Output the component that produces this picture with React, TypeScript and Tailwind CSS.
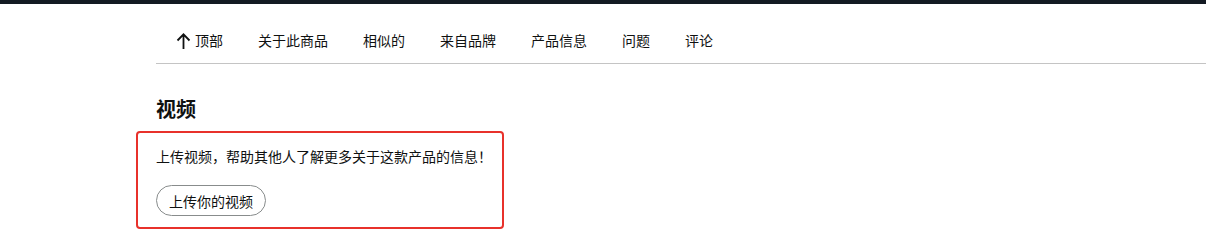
const navItems = ["关于此商品", "相似的", "来自品牌", "产品信息", "问题", "评论"];

const App = () => {
  return (
    <div
      className="min-h-[242px] bg-white text-[#0f1111]"
      style={{ fontFamily: '"Noto Sans CJK SC", "Noto Sans", sans-serif' }}
    >
      <div className="h-[4px] bg-[#131a22]" />
      <nav className="ml-[156px] border-b border-[#c4c4c4]">
        <ul className="flex h-[59px] items-center gap-[35px] pl-[20px] pt-[14px] text-[14px]">
          <li className="flex items-center gap-[4px]">
            <svg width="15" height="18" viewBox="0 0 15 18" fill="none" stroke="#0f1111" strokeWidth="1.8">
              <path d="M7.5 17V2.5M1.5 8.5l6-6.2 6 6.2" />
            </svg>
            <span>顶部</span>
          </li>
          {navItems.map((item) => (
            <li key={item}>{item}</li>
          ))}
        </ul>
      </nav>
      <section className="pl-[136px] pt-[33px]">
        <h2 className="pl-[20px] text-[20px] font-bold leading-[24px]">视频</h2>
        <div className="mt-[10px] w-[368px] rounded-[4px] border-[2.5px] border-[#e8312b] pb-[11px] pl-[18px] pr-[6px] pt-[13px]">
          <p className="whitespace-nowrap text-[14px] leading-[20px]">上传视频，帮助其他人了解更多关于这款产品的信息！</p>
          <button className="mt-[19px] h-[31px] rounded-full border border-[#888c8c] px-[12px] text-[14px] leading-[20px]">
            上传你的视频
          </button>
        </div>
      </section>
    </div>
  );
};

export default App;
